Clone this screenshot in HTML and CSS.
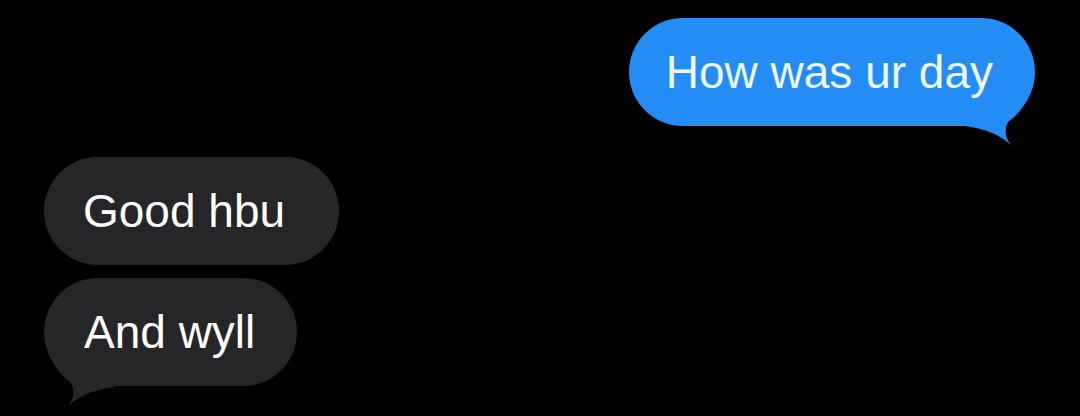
FILE: index.html
```html
<!DOCTYPE html>
<html lang="en">
<head>
<meta charset="utf-8">
<title>Messages</title>
<link rel="stylesheet" href="styles.css">
</head>
<body>
<main class="thread">
  <div class="row row-sent">
    <div class="bubble bubble-sent">
      <span class="text">How was ur day</span>
      <svg class="tail tail-sent" viewBox="0 0 86 70" width="86" height="70" aria-hidden="true">
        <path d="M16 48 Q46 52 62 67 Q53 56 59 44 Q72 35 80 18 L40 0 Z"/>
      </svg>
    </div>
  </div>
  <div class="group-received">
    <div class="row">
      <div class="bubble bubble-received bubble-wide">
        <span class="text">Good hbu</span>
      </div>
    </div>
    <div class="row">
      <div class="bubble bubble-received">
        <span class="text">And wyll</span>
        <svg class="tail tail-received" viewBox="0 0 86 70" width="86" height="70" aria-hidden="true">
          <path d="M70 48 Q40 52 24 67 Q33 56 27 44 Q14 35 6 18 L46 0 Z"/>
        </svg>
      </div>
    </div>
  </div>
</main>
</body>
</html>
```

FILE: styles.css
```css
html, body {
  margin: 0;
  padding: 0;
  background: #000;
}

body {
  width: 1080px;
  height: 416px;
  overflow: hidden;
  font-family: "Liberation Sans", Arial, sans-serif;
}

.thread {
  display: flex;
  flex-direction: column;
  padding: 18px 45px 0 44px;
}

.row {
  display: flex;
}

.row-sent {
  justify-content: flex-end;
}

.group-received {
  display: flex;
  flex-direction: column;
  gap: 13px;
  margin-top: 31px;
}

.bubble {
  position: relative;
  height: 108px;
  line-height: 108px;
  font-size: 46px;
  border-radius: 54px;
  padding: 0 42px 0 40px;
  white-space: nowrap;
}

.bubble-sent {
  background: #248cf5;
  color: #eef8ff;
  padding: 0 42px 0 37px;
}

.bubble-received {
  background: #262628;
  color: #ffffff;
}

.bubble-wide {
  padding: 0 54px 0 39px;
}

.text {
  position: relative;
  z-index: 1;
}

.tail {
  position: absolute;
  top: 60px;
  display: block;
}

.tail-sent {
  right: 0;
  fill: #248cf5;
}

.tail-received {
  left: 0;
  top: 61px;
  fill: #262628;
}
```
